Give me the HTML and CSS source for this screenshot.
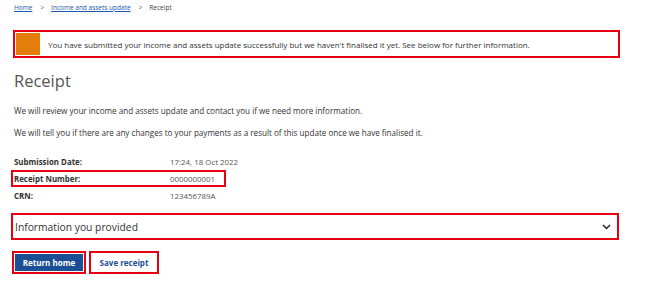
FILE: index.html
```html
<!DOCTYPE html>
<html lang="en">
<head>
<meta charset="utf-8">
<title>Receipt</title>
<link rel="stylesheet" href="styles.css">
</head>
<body>
<div class="page">
  <nav class="crumbs">
    <a href="#">Home</a><span class="sep">&gt;</span><a href="#">Income and assets update</a><span class="sep">&gt;</span><span class="cur">Receipt</span>
  </nav>
  <div class="alert">
    <div class="alert-bar"></div>
    <div class="alert-text">You have submitted your income and assets update successfully but we haven't finalised it yet. See below for further information.</div>
  </div>
  <h1 class="title">Receipt</h1>
  <p class="para">We will review your income and assets update and contact you if we need more information.</p>
  <p class="para">We will tell you if there are any changes to your payments as a result of this update once we have finalised it.</p>
  <div class="details">
    <div class="row"><span class="label">Submission Date:</span><span class="value">17:24, 18 Oct 2022</span></div>
    <div class="row hl"><span class="label">Receipt Number:</span><span class="value">0000000001</span></div>
    <div class="row"><span class="label">CRN:</span><span class="value">123456789A</span></div>
  </div>
  <div class="accordion">
    <span class="acc-title">Information you provided</span>
    <svg class="chev" width="9" height="6" viewBox="0 0 9 6"><path d="M1 1 L4.5 4.5 L8 1" fill="none" stroke="#222" stroke-width="1.5"/></svg>
  </div>
  <div class="actions">
    <button class="btn primary">Return home</button>
    <button class="btn secondary">Save receipt</button>
  </div>
</div>
</body>
</html>
```
FILE: styles.css
```css
* { box-sizing: border-box; }
html, body { margin: 0; padding: 0; background: #fff; }
body { font-family: "Open Sans", "Noto Sans", sans-serif; color: #333; }
.page { padding: 0 0 0 11px; width: 620px; }
.crumbs { font-size: 6.5px; line-height: 10px; padding: 3px 0 0 3px; color: #444; display: flex; align-items: center; }
.crumbs a { color: #1a56b0; text-decoration: underline; }
.crumbs .sep { margin: 0 7px 0 8px; color: #666; }
.crumbs .cur { color: #444; }
.alert { margin: 17px 0 0 2px; width: 607px; height: 28px; border: 2px solid #e60012; padding: 1px; display: flex; align-items: stretch; }
.alert-bar { width: 24px; background: #e57d0a; flex: none; }
.alert-text { font-size: 8px; color: #333; display: flex; align-items: center; padding-left: 8px; padding-top: 1px; white-space: nowrap; }
.title { font-weight: 400; font-size: 16.5px; color: #555; margin: 11px 0 0 3px; line-height: 24px; }
.para { font-size: 8.1px; margin: 0 0 0 3px; line-height: 12px; color: #333; white-space: nowrap; }
.title + .para { margin-top: 12px; }
.para + .para { margin-top: 10px; }
.details { margin-top: 14px; }
.row { display: flex; align-items: center; height: 17px; font-size: 7.9px; padding-left: 3px; }
.row .label { font-weight: 700; width: 156px; color: #333; flex: none; }
.row .value { color: #555; white-space: nowrap; }
.row.hl { width: 215px; outline: 2px solid #e60012; outline-offset: -2px; }
.accordion { margin-top: 9px; width: 608px; height: 27px; border: 2px solid #e60012; display: flex; align-items: center; justify-content: space-between; padding: 0 6px 0 2px; }
.acc-title { font-size: 10.3px; color: #333; }
.chev { display: block; }
.actions { display: flex; gap: 3px; margin-top: 11px; margin-left: 1px; }
.btn { font-family: inherit; font-size: 8px; font-weight: 700; height: 23px; border: 2px solid #e60012; cursor: pointer; padding: 0; }
.btn.primary { width: 74px; background: #1b4f93; color: #fff; box-shadow: inset 0 0 0 1px #fff; }
.btn.secondary { width: 70px; background: #fff; color: #1b4f93; box-shadow: inset 0 0 0 1px #fff; }
```
